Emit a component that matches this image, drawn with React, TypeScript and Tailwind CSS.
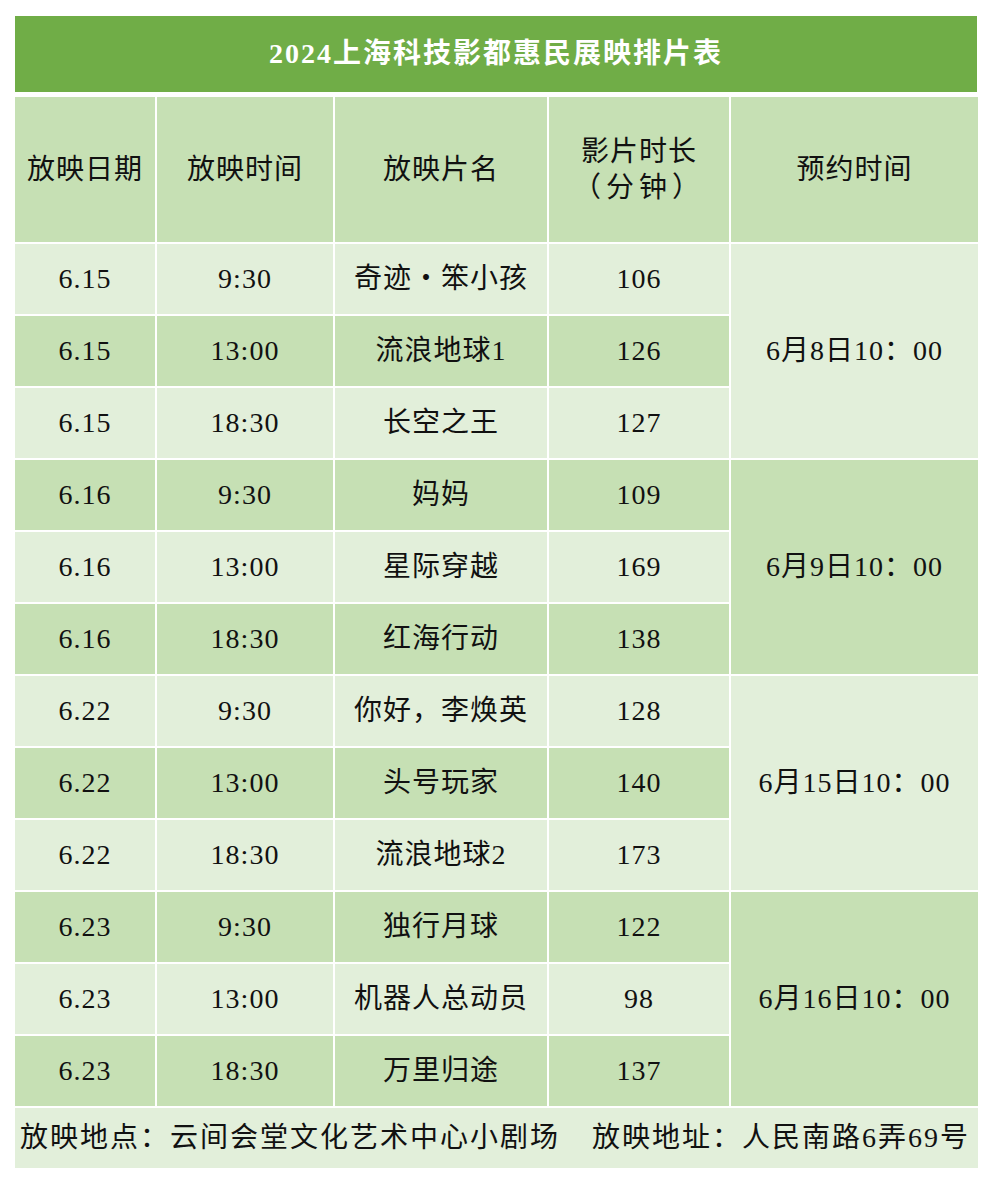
const FONT = { fontFamily: '"Liberation Serif", "Noto Sans CJK SC", serif' };

const LIGHT = "bg-[#e2efda]";
const DARK = "bg-[#c6e0b4]";

interface Show {
  date: string;
  time: string;
  title: string;
  minutes: string;
}

const groups: { booking: string; shows: Show[] }[] = [
  {
    booking: "6月8日10：00",
    shows: [
      { date: "6.15", time: "9:30", title: "奇迹・笨小孩", minutes: "106" },
      { date: "6.15", time: "13:00", title: "流浪地球1", minutes: "126" },
      { date: "6.15", time: "18:30", title: "长空之王", minutes: "127" },
    ],
  },
  {
    booking: "6月9日10：00",
    shows: [
      { date: "6.16", time: "9:30", title: "妈妈", minutes: "109" },
      { date: "6.16", time: "13:00", title: "星际穿越", minutes: "169" },
      { date: "6.16", time: "18:30", title: "红海行动", minutes: "138" },
    ],
  },
  {
    booking: "6月15日10：00",
    shows: [
      { date: "6.22", time: "9:30", title: "你好，李焕英", minutes: "128" },
      { date: "6.22", time: "13:00", title: "头号玩家", minutes: "140" },
      { date: "6.22", time: "18:30", title: "流浪地球2", minutes: "173" },
    ],
  },
  {
    booking: "6月16日10：00",
    shows: [
      { date: "6.23", time: "9:30", title: "独行月球", minutes: "122" },
      { date: "6.23", time: "13:00", title: "机器人总动员", minutes: "98" },
      { date: "6.23", time: "18:30", title: "万里归途", minutes: "137" },
    ],
  },
];

const Cell = ({ bg, children, className = "" }: { bg: string; children: React.ReactNode; className?: string }) => (
  <div className={`flex items-center justify-center text-center ${bg} ${className}`}>{children}</div>
);

const App = () => {
  return (
    <div className="min-h-[1183px] w-[994px] bg-white pt-[16px] pl-[15px] text-[#111] text-[28px] tracking-[1px] leading-[36px]" style={FONT}>
      <div className="flex h-[76px] w-[962px] items-center justify-center bg-[#70ad47] font-semibold tracking-[2px] text-white">
        2024上海科技影都惠民展映排片表
      </div>

      <div className="mt-[5px] grid w-[963px] grid-cols-[140px_176px_212px_180px_247px] grid-rows-[145px_repeat(12,70px)] gap-[2px] bg-white">
        <Cell bg={DARK}>放映日期</Cell>
        <Cell bg={DARK}>放映时间</Cell>
        <Cell bg={DARK}>放映片名</Cell>
        <Cell bg={DARK} className="flex-col">
          <span>影片时长</span>
          <span className="tracking-[5px]">（分钟）</span>
        </Cell>
        <Cell bg={DARK}>预约时间</Cell>

        {groups.map((g, gi) =>
          g.shows.map((s, si) => {
            const bg = (gi * 3 + si) % 2 === 0 ? LIGHT : DARK;
            return [
              <Cell key={`${gi}-${si}-d`} bg={bg}>{s.date}</Cell>,
              <Cell key={`${gi}-${si}-t`} bg={bg}>{s.time}</Cell>,
              <Cell key={`${gi}-${si}-n`} bg={bg}>{s.title}</Cell>,
              <Cell key={`${gi}-${si}-m`} bg={bg}>{s.minutes}</Cell>,
              si === 0 ? (
                <Cell key={`${gi}-b`} bg={gi % 2 === 0 ? LIGHT : DARK} className="row-span-3">
                  {g.booking}
                </Cell>
              ) : null,
            ];
          })
        )}
      </div>

      <div className={`mt-[2px] flex h-[60px] w-[963px] items-center pl-[5px] tracking-[2px] ${LIGHT}`}>
        <span>放映地点：云间会堂文化艺术中心小剧场</span>
        <span className="ml-[32px]">放映地址：人民南路6弄69号</span>
      </div>
    </div>
  );
};

export default App;
